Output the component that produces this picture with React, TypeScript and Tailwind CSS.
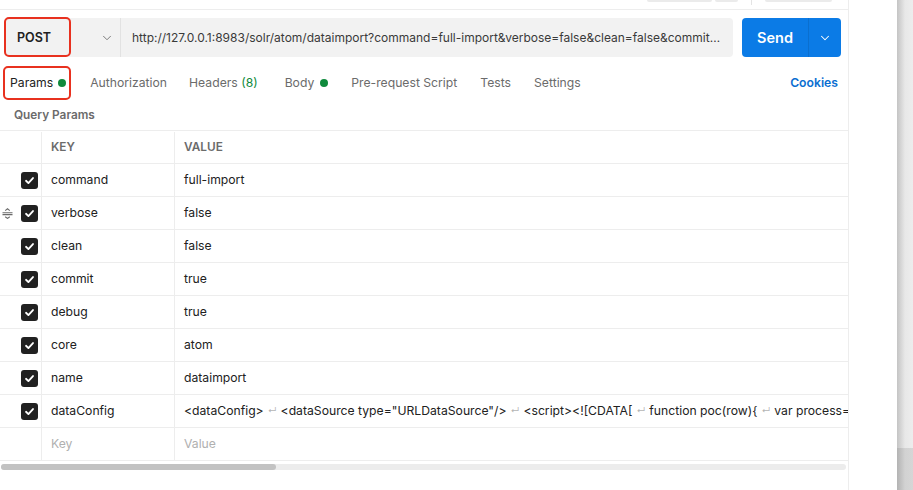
import { ChevronDown } from "lucide-react";

const params: [string, string][] = [
  ["command", "full-import"],
  ["verbose", "false"],
  ["clean", "false"],
  ["commit", "true"],
  ["debug", "true"],
  ["core", "atom"],
  ["name", "dataimport"],
];

const Check = () => (
  <div className="w-[17px] h-[17px] rounded-[3px] bg-[#212121] flex items-center justify-center">
    <svg width="11" height="11" viewBox="0 0 12 12" fill="none">
      <path d="M2.2 6.3 4.8 8.8 9.8 3.3" stroke="white" strokeWidth="2" strokeLinecap="round" strokeLinejoin="round" />
    </svg>
  </div>
);

const Grip = () => (
  <svg width="11" height="11" viewBox="0 0 11 11" fill="none" stroke="#6b6b6b" strokeWidth="1.1">
    <path d="M0.5 4.8h10M0.5 6.6h10" />
    <path d="M3.2 2.6 5.5 0.8 7.8 2.6M3.2 8.8 5.5 10.4 7.8 8.8" />
  </svg>
);

const Ret = () => <span className="text-[#b5b5b5] text-[9px] mx-[4px]">↵</span>;

const Row = ({ k, v, grip }: { k: string; v: React.ReactNode; grip?: boolean }) => (
  <div className="flex h-[33px] border-b border-[#ededed] items-stretch">
    <div className="w-[42px] border-r border-[#ededed] flex items-center justify-end pr-[3px] gap-[8px] shrink-0">
      {grip && <Grip />}
      <Check />
    </div>
    <div className="w-[133px] border-r border-[#ededed] flex items-center pl-[9px] shrink-0">{k}</div>
    <div className="flex-1 flex items-center pl-[9px] whitespace-nowrap overflow-hidden">{v}</div>
  </div>
);

const App = () => {
  return (
    <div
      className="flex flex-row h-[490px] w-[913px] overflow-hidden bg-white text-[#212121] text-[12.2px]"
      style={{ fontFamily: "Inter, 'Noto Sans', sans-serif" }}
    >
      <div className="w-[849px] shrink-0 border-r border-[#ededed] flex flex-col">
        {/* top bar remnant */}
        <div className="h-[10px] border-b border-[#ededed] flex items-start shrink-0">
          <div className="ml-[647px] w-[65px] h-[2px] bg-[#ebebeb] rounded-b-[3px]" />
          <div className="ml-[3px] w-[23px] h-[2px] bg-[#ebebeb] rounded-b-[3px]" />
          <div className="ml-[13px] w-px h-[5px] bg-[#e4e4e4]" />
          <div className="ml-[13px] w-[67px] h-[2px] bg-[#ebebeb] rounded-b-[3px]" />
        </div>

        {/* url bar */}
        <div className="flex items-center mt-[8px] pl-[5px] h-[39px] shrink-0">
          <div className="relative w-[728px] h-[39px] bg-[#f2f2f2] rounded-[4px] flex items-center">
            <div className="w-[116px] h-full border-r border-[#e2e2e2] flex items-center pl-[12px] pr-[6px] pt-[1px] justify-between">
              <span className="font-semibold text-[12.5px] text-[#212121]">POST</span>
              <ChevronDown size={14} strokeWidth={1.5} className="text-[#6b6b6b]" />
            </div>
            <div className="flex-1 pl-[11px] pr-[11px] truncate text-[12px] text-[#3a3a3a]">
              http://127.0.0.1:8983/solr/atom/dataimport?command=full-import&amp;verbose=false&amp;clean=false&amp;commit=true&amp;debug=true&amp;core=atom&amp;name=dataimport
            </div>
            <div className="absolute left-[-1px] top-[-1px] w-[67px] h-[40px] border-2 border-[#e8311f] rounded-[5px]" />
          </div>
          <div className="ml-[9px] w-[99px] h-[39px] bg-[#0b7be6] rounded-[4px] flex text-white">
            <div className="w-[67px] flex items-center justify-center font-semibold text-[14.5px] border-r border-[#0a6fcf]">Send</div>
            <div className="flex-1 flex items-center justify-center">
              <ChevronDown size={14} strokeWidth={1.8} />
            </div>
          </div>
        </div>

        {/* tabs */}
        <div className="relative flex items-center h-[34px] mt-[9px] pl-[10px] pr-[10px] text-[#6b6b6b] shrink-0">
          <div className="flex items-center gap-[5px] text-[#212121]">
            Params <span className="w-[8px] h-[8px] rounded-full bg-[#0f8a3c]" />
          </div>
          <div className="absolute left-[3px] top-0 w-[68px] h-[34px] border-2 border-[#e8311f] rounded-[5px]" />
          <div className="ml-[24px]">Authorization</div>
          <div className="ml-[22px]">
            Headers <span className="text-[#0f8a3c]">(8)</span>
          </div>
          <div className="ml-[27px] flex items-center gap-[6px]">
            Body <span className="w-[8px] h-[8px] rounded-full bg-[#0f8a3c]" />
          </div>
          <div className="ml-[23px]">Pre-request Script</div>
          <div className="ml-[23px]">Tests</div>
          <div className="ml-[23px]">Settings</div>
          <div className="ml-auto font-semibold text-[#0b6fd1]">Cookies</div>
        </div>

        <div className="pl-[14px] h-[30px] flex items-center font-semibold text-[11.8px] text-[#6b6b6b] shrink-0 pt-[1px]">
          Query Params
        </div>

        {/* table */}
        <div className="border-t border-[#ededed]">
          <div className="flex h-[33px] border-b border-[#ededed] text-[11.8px] font-semibold text-[#6b6b6b] pt-[1px]">
            <div className="w-[42px] border-r border-[#ededed] shrink-0" />
            <div className="w-[133px] border-r border-[#ededed] flex items-center pl-[9px] shrink-0">KEY</div>
            <div className="flex-1 flex items-center pl-[9px]">VALUE</div>
          </div>
          {params.map(([k, v]) => (
            <Row key={k} k={k} v={v} grip={k === "verbose"} />
          ))}
          <Row
            k="dataConfig"
            v={
              <>
                {"<dataConfig>"}
                <Ret />
                {'<dataSource type="URLDataSource"/>'}
                <Ret />
                {"<script><![CDATA["}
                <Ret />
                {"function poc(row){"}
                <Ret />
                {"var process= java.lang.Runtime.getRuntime();"}
              </>
            }
          />
          <div className="flex h-[33px] border-b border-[#ededed] text-[#b0b0b0]">
            <div className="w-[42px] border-r border-[#ededed] shrink-0" />
            <div className="w-[133px] border-r border-[#ededed] flex items-center pl-[9px] shrink-0">Key</div>
            <div className="flex-1 flex items-center pl-[9px]">Value</div>
          </div>
        </div>

        {/* scrollbar */}
        <div className="mt-[3px] ml-[1px] w-[845px] h-[6px] rounded-full bg-[#ececec]">
          <div className="w-[275px] h-full rounded-full bg-[#c2c2c2]" />
        </div>
      </div>

      <div className="w-[48px] shrink-0 bg-white" />
      <div className="flex-1 flex flex-col">
        <div className="h-[448px] bg-gradient-to-r from-[#c4c4c4] via-[#e8e8e8] to-[#ededed]" />
        <div className="flex-1 bg-gradient-to-r from-[#b3b3b3] via-[#d2d2d2] to-[#d6d6d6]" />
      </div>
    </div>
  );
};

export default App;
